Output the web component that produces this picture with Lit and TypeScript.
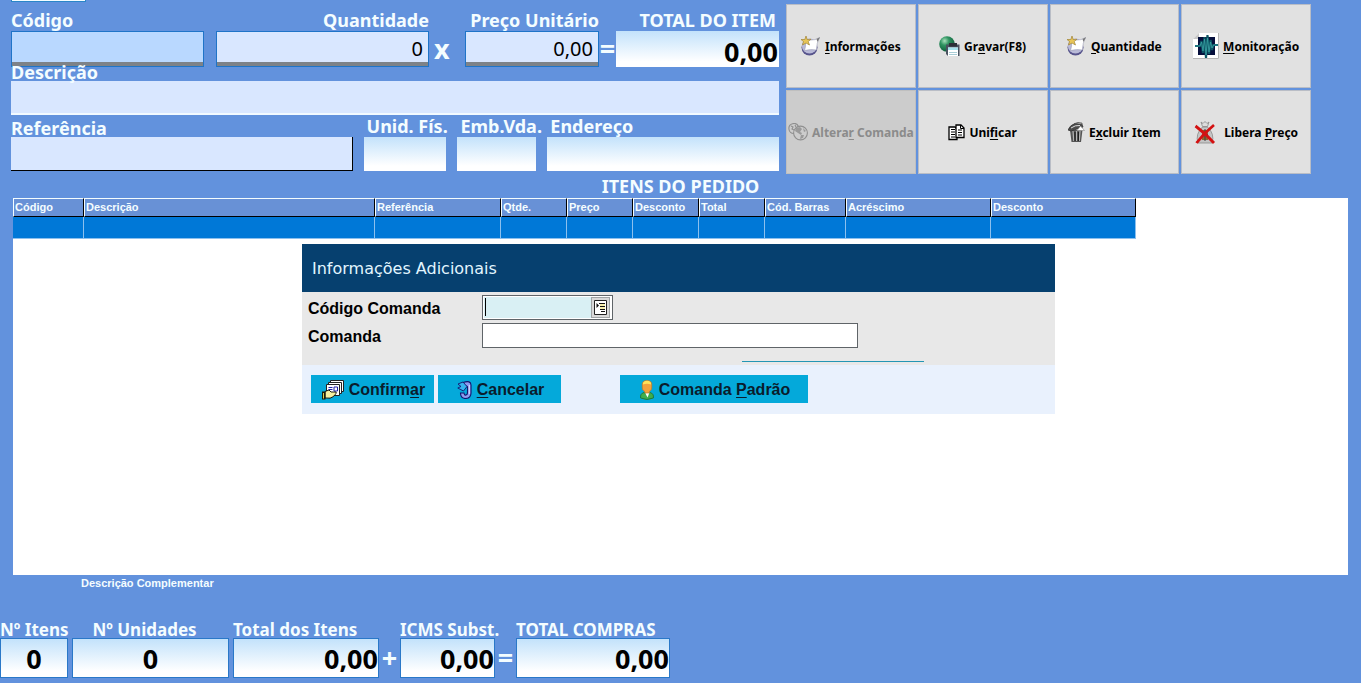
import { LitElement, html, css, svg } from "lit";
import { customElement } from "lit/decorators.js";

const scroll = svg`
  <circle cx="8.500" cy="11.500" r="8" fill="#57548c"/>
  <circle cx="8.500" cy="10" r="7.600" fill="#b9bad8"/>
  <path d="M4 4.500 L9 4 Q14 4.500 18.500 1.500 Q15.500 7 15.500 14 Q10 13 3.500 14.500 Q5.500 9 4 4.500Z" fill="#fff" stroke="#9a9cb4" stroke-width=".6"/>
  <path d="M15.500 3 L19 1.200 L16.500 6Z" fill="#777"/>
  <path d="M5 0 L6.200 3.500 L10 3.200 L7.200 5.500 L8.500 9 L5 7 L1.500 9 L2.500 5.500 L0 3.500 L3.800 3.500Z" fill="#e8c558" stroke="#a08538" stroke-width=".7"/>`;

const globeDisk = svg`
  <defs><radialGradient id="g" cx=".35" cy=".3" r=".7"><stop offset="0" stop-color="#a8e0bc"/><stop offset=".4" stop-color="#2f9461"/><stop offset="1" stop-color="#0f5d3b"/></radialGradient></defs>
  <circle cx="8" cy="8" r="7.800" fill="url(#g)"/>
  <path d="M7 8.500h13.500v11.500H9L7 18Z" fill="#4a5260"/>
  <path d="M10 7h8v3.500h-8z" fill="#2c3038"/>
  <path d="M9 11.500h10v8.500H9z" fill="#fff"/>
  <path d="M9 11.500h10v2.500H9z" fill="#a6e4ee"/>
  <path d="M10 16.500h8M10 18.500h8" stroke="#a9cdd6"/>`;

const monitor = svg`
  <path d="M6 0H26V26H0V6Z" fill="#fff"/><path d="M0 6L6 0V6Z" fill="#c8c8c8"/>
  <path d="M25.500 0V25.500H0" fill="none" stroke="#b4b4b4"/>
  <path d="M5 4H22V22H5Z" fill="#060f3c"/>
  <path d="M2 13H7L8.500 8L10 20L11.500 4L13 25L14.500 2L16 21L17.500 7L19 17L20.500 12H25" fill="none" stroke="#0c5564" stroke-width="2.200"/>
  <path d="M2 13H7L8.500 9L10 18L11.500 6L13 22L14.500 5L16 19L17.500 9L19 15L20.500 12H25" fill="none" stroke="#3aa3a4" stroke-width=".8"/>`;

const worlds = svg`
  <g fill="none" stroke="#8f8f8f" stroke-width="1.100">
  <path d="M6 10.500A5 5 0 1 1 10.500 3.500"/><circle cx="12.500" cy="10" r="6.900"/>
  <path d="M3 3l2 1-1 2 2 1M7 2l1 2"/></g>
  <path d="M8 5L12 4L14 6L12 9L14 10L13 12L10 10L7 8ZM15 5L18 8L16 9ZM13 12L16 12L15 15L12 16Z" fill="#9a9a9a"/>`;

const pages = svg`
  <g fill="#fff" stroke="#000" stroke-width="1.300">
  <path d="M1 3H7L9 5V15.500H1Z"/><path d="M8 1H13L16 4V13.500H8Z"/></g>
  <path d="M12.500 1V4.500H16M3 5.500H7M3 8H7M3 10.500H7M3 13H7M10 6H14M10 8.500H14M10 11H14" stroke="#000" fill="none"/>`;

const trash = svg`
  <path d="M2 8H14.500L13 20H3.500Z" fill="#555"/>
  <path d="M5 9L5.800 19M8.500 9V19M12 9L11.300 19" stroke="#b5b5b5" stroke-width="1.200"/>
  <path d="M7 10V19M10.300 10V19" stroke="#111"/>
  <path d="M0 8Q2 3 7 1.500L14 2.500L15 5L3 9Z" fill="#4b4b4b" stroke="#333" stroke-width=".8"/>
  <path d="M3 6Q7 3 12 3.500" stroke="#ddd" fill="none"/>
  <path d="M9 8.500L12.500 4L16.500 8.500Z" fill="#fff" stroke="#888" stroke-width=".6"/>
  <path d="M6 1.800L10 .6L14 1.200V3" fill="none" stroke="#555"/>`;

const bagX = svg`
  <path d="M7 1L9 2.500L11 .5L13 2.500L15 1L13.500 5.500H8.500Z" fill="#ddd" stroke="#888" stroke-width=".8"/>
  <path d="M8.500 6H13.500Q21 13 18 22H4Q1 13 8.500 6Z" fill="#c4c4c4" stroke="#8a8a8a" stroke-width=".8"/>
  <path d="M8 9h6v10h-6z" fill="#8c6a32"/><path d="M11 8v12M8 13.500h6" stroke="#3c3c3c"/>
  <path d="M1.500 5Q11 12 20 22M20 4Q10 12 2.500 22" stroke="#d31111" stroke-width="2.800" fill="none"/>`;

const handCards = svg`
  <g fill="#fff" stroke="#222"><path d="M8.500 .5H21.500V11.500H8.500Z"/><path d="M6.500 2.500H19.500V13.500H6.500Z"/><path d="M4.500 4.500H17.500V15.500H4.500Z"/></g>
  <path d="M6.500 7.500H10.500M6.500 9.500H10.500" stroke="#2222a8"/><path d="M12 7H15.500V11H12Z" fill="#fff" stroke="#2222a8"/>
  <path d="M3 11.500L7 10L9 12H14Q15 13.500 13 14.500L11.500 16.500Q9 19 3 18Z" fill="#f7f0a0" stroke="#000" stroke-width=".9"/>
  <path d="M0 11.500H3.500V19.500H0Z" fill="#1c1c08"/><path d="M1.500 13V18.500" stroke="#d8d050"/>`;

const undo = svg`
  <path d="M6 1.500Q14-1 14 4V12Q14 17.500 8 17.500Q3.500 17 3.500 12H7Q7.500 14.500 9 14Q10.500 14 10.500 11V6Q10 4.500 8 5.500Z" fill="#8f9df0" stroke="#14146e" stroke-width="1.100"/>
  <path d="M1 3L6 1L10 5.500L6.500 10L.8 7L4 5.500Z" fill="#35b4ee" stroke="#14146e" stroke-width=".9"/>
  <path d="M12.300 4V13" stroke="#dde2ff"/>`;

const person = svg`
  <path d="M.6 18Q0 13.500 4 12.500L7 14L10 12.500Q14 13.500 13.400 18Q7 21 .6 18Z" fill="#3fae4e" stroke="#1c6e2c" stroke-width=".8"/>
  <path d="M5 12.500L7.500 17.500L9.500 12.500Z" fill="#fff"/>
  <path d="M2.200 5Q2 .5 7 .5Q12 .5 11.800 5Q12.500 10 9.500 11.500L9 13H5L4.500 11.500Q1.500 10 2.200 5Z" fill="#f2a23c" stroke="#b87a26" stroke-width=".7"/>
  <path d="M2.800 4.500Q3 .8 7 .8Q11 .8 11.200 4.500Q7 3 2.800 4.500Z" fill="#ffe35a"/>`;

const list = svg`
  <path d="M.5 .5H12.500V14.500H.5Z" fill="#fff" stroke="#222"/>
  <path d="M5 3.500H11M6 6.500H11M6 9.500H11M7 11.500H11" stroke="#111"/>
  <path d="M6 5H11M6 8H11" stroke="#f0e060"/>
  <path d="M2.500 3V8L5 5.500Z" fill="#111"/>`;

const icon = (w: number, h: number, art: unknown) =>
  html`<svg width=${w} height=${h} viewBox="0 0 ${w} ${h}" aria-hidden="true">${art}</svg>`;

const columns: [string, string][] = [
  ["Código", "w71"], ["Descrição", "w291"], ["Referência", "w126"], ["Qtde.", "w66"], ["Preço", "w66"],
  ["Desconto", "w66"], ["Total", "w66"], ["Cód. Barras", "w81"], ["Acréscimo", "w145"], ["Desconto", "w145"],
];

@customElement("app-root")
export class AppRoot extends LitElement {
  static styles = css`
    :host {
      display: flex;
      flex-direction: column;
      min-height: 100vh;
      box-sizing: border-box;
      background: #6292dd;
      color: #f4fdff;
      font-family: "Noto Sans", "Open Sans", sans-serif;
    }
    * { box-sizing: border-box; }
    svg { display: block; flex: none; }
    input, button { font: inherit; border-radius: 0; margin: 0; }
    input { display: block; width: 100%; min-width: 0; border: 0; padding: 0; color: #000; outline: 0; }
    button { border: 0; padding: 0; color: #000; cursor: pointer; }

    .top { display: flex; gap: 7px; padding: 0 50px 0 11px; }
    .fields { flex: 768 1 0; min-width: 0; font-size: 18px; font-weight: 700; }
    .stub { height: 2px; width: 75px; background: #f4fdff; border: 1px solid #2a86c8; border-top: 0; }
    label { display: block; white-space: nowrap; line-height: 22px; }
    label.tight { line-height: 11px; padding-bottom: 3px; }
    .right { text-align: right; }
    .caps { padding-right: 3px; }
    .row1 { display: grid; grid-template-columns: 193fr 12px 213fr 36px 134fr 17px 163fr; margin-top: 7px; align-items: end; }
    .row3 { display: grid; grid-template-columns: minmax(0, 342fr) minmax(0, 83fr) minmax(0, 79fr) minmax(0, 232fr); column-gap: 11px; align-items: end; }
    .row3 label { padding-left: 3px; }
    .row3 label.tight { padding-left: 0; }
    .op { line-height: 36px; text-align: center; font-size: 27px; }
    .times { text-align: left; padding-left: 5px; }
    .edit { height: 36px; background: #d9e7ff; border: 1px solid #1f74c8; box-shadow: inset 0 -4px #7d8288; padding: 0 5px 2px; text-align: right; font-weight: 400; font-size: 20px; }
    .active { background: #b9d8ff; text-align: left; }
    .wide { height: 34px; background: #d9e7ff; border-bottom: 2px solid #f2faff; padding: 0 5px; }
    .ref { border-bottom: 1px solid #000; border-right: 1px solid #000; }
    .shade { height: 34px; background: linear-gradient(#c3e2fb, #fff 85%); padding: 0 4px; }
    .sum { height: 36px; padding: 4px 1px 0 0; text-align: right; font-weight: 700; font-size: 27px; }

    .tools { flex: 525 1 0; min-width: 0; display: grid; grid-template-columns: repeat(4, minmax(0, 1fr)); grid-auto-rows: 84px; gap: 2px; padding-top: 4px; }
    .tool { display: flex; align-items: center; justify-content: center; gap: 4px; background: #e1e1e1; border: 1px solid #b9bdc6; font-size: 12px; font-weight: 700; white-space: nowrap; }
    .tool:disabled { background: #ccc; color: #8b8b8b; border-color: #bfbfbf; }
    u { text-underline-offset: 2px; text-decoration-thickness: 1px; }

    h1 { margin: 0; font-size: 18px; font-weight: 700; line-height: 24px; text-align: center; }
    .items { flex: 1; margin: 0 13px; padding-right: 4px; background: #fff; min-height: 300px; }
    table { table-layout: fixed; border-collapse: separate; border-spacing: 0; width: 1123px; font-family: "Liberation Sans", Arial, sans-serif; }
    th { height: 19px; padding: 0 1px; font-size: 11px; line-height: 17px; font-weight: 700; text-align: left; background: #6891d6; border: 1px solid; border-color: #f4fdff #000 #000 #f4fdff; white-space: nowrap; }
    td { height: 22px; padding: 0; background: #0078d7; border-right: 1px solid #8cc0ee; border-bottom: 1px solid #8cc0ee; }
    .w71 { width: 71px; } .w291 { width: 291px; } .w126 { width: 126px; } .w66 { width: 66px; } .w81 { width: 81px; } .w145 { width: 145px; }

    .dialog { max-width: 753px; margin: 5px auto 0; color: #000; font-family: "Liberation Sans", Arial, sans-serif; font-size: 16px; font-weight: 700; }
    h2 { margin: 0; padding: 2px 10px 0; background: #06406f; color: #e2f6ff; font: 400 16px/46px "DejaVu Sans", Verdana, sans-serif; }
    .body { display: grid; grid-template-columns: 174px 1fr; row-gap: 3px; padding: 3px 6px; background: #e8e8e8; }
    .body label { line-height: 23px; padding-top: 2px; }
    .lookup { display: flex; width: 131px; height: 25px; border: 1px solid #5f6468; padding: 1px; background: #fff; }
    .lookup input { flex: 1; background: linear-gradient(#000, #000) 1px 1px / 1px 18px no-repeat #d9f0f4; }
    .lookup button { width: 19px; margin-right: 1px; display: grid; place-items: center; background: #d8d8d8; border: 1px solid #a0a4a6; }
    .comanda { width: 376px; height: 25px; border: 1px solid #5f6468; background: #fff; padding: 0 4px; }
    .rule { grid-column: 2; width: 182px; height: 11px; margin-left: 260px; border-bottom: 1px solid #2396b4; }
    .actions { display: flex; gap: 4px; padding: 10px 9px 11px; background: #e9f1fd; }
    .action { display: flex; align-items: center; justify-content: center; gap: 5px; width: 123px; height: 28px; padding: 2px 0 0 2px; background: #04a9da; color: #0a1c2c; }
    .default { width: 188px; margin-left: 55px; }

    .extra { font: 700 11px/16px "Liberation Sans", Arial, sans-serif; margin: 0 0 0 81px; }
    .totals { display: flex; gap: 4px; align-items: flex-end; padding: 30px 0 5px; font-size: 17px; font-weight: 700; }
    .totals label { line-height: 17px; }
    .totals .sum { height: 40px; padding: 0; border: 1px solid #2a78c8; }
    .totals .mid { text-align: center; }
    .totals label.mid { padding-right: 12px; }
    .totals .op { width: 13px; line-height: 40px; display: flex; justify-content: center; }
    .t68 { width: 68px; } .t157 { width: 157px; } .t146 { width: 146px; } .t95 { width: 95px; } .t154 { width: 154px; }
  `;

  render() {
    return html`
      <header class="top">
        <div class="fields">
          <div class="stub"></div>
          <div class="row1">
            <div><label for="codigo">Código</label><input id="codigo" class="edit active" /></div>
            <span></span>
            <div><label class="right" for="qtd">Quantidade</label><input id="qtd" class="edit" value="0" /></div>
            <span class="op times">x</span>
            <div><label class="right" for="preco">Preço Unitário</label><input id="preco" class="edit" value="0,00" /></div>
            <span class="op">=</span>
            <div><label class="right caps" for="total">TOTAL DO ITEM</label><input id="total" class="shade sum" value="0,00" readonly /></div>
          </div>
          <label class="tight" for="desc">Descrição</label>
          <input id="desc" class="wide" />
          <div class="row3">
            <div><label class="tight" for="ref">Referência</label><input id="ref" class="wide ref" /></div>
            <div><label for="unid">Unid. Fís.</label><input id="unid" class="shade" readonly /></div>
            <div><label for="emb">Emb.Vda.</label><input id="emb" class="shade" readonly /></div>
            <div><label for="end">Endereço</label><input id="end" class="shade" readonly /></div>
          </div>
        </div>
        <nav class="tools">
          <button class="tool">${icon(20, 20, scroll)}<span><u>I</u>nformações</span></button>
          <button class="tool">${icon(21, 20, globeDisk)}<span>Gr<u>a</u>var(F8)</span></button>
          <button class="tool">${icon(20, 20, scroll)}<span><u>Q</u>uantidade</span></button>
          <button class="tool">${icon(26, 26, monitor)}<span><u>M</u>onitoração</span></button>
          <button class="tool" disabled>${icon(20, 18, worlds)}<span>Altera<u>r</u> Comanda</span></button>
          <button class="tool">${icon(17, 17, pages)}<span>Uni<u>f</u>icar</span></button>
          <button class="tool">${icon(17, 21, trash)}<span>E<u>x</u>cluir Item</span></button>
          <button class="tool">${icon(26, 23, bagX)}<span>Libera <u>P</u>reço</span></button>
        </nav>
      </header>
      <h1>ITENS DO PEDIDO</h1>
      <main class="items">
        <table>
          <thead><tr>${columns.map(([name, width]) => html`<th class=${width}>${name}</th>`)}</tr></thead>
          <tbody><tr>${columns.map(() => html`<td></td>`)}</tr></tbody>
        </table>
        <section class="dialog" role="dialog" aria-labelledby="dlg">
          <h2 id="dlg">Informações Adicionais</h2>
          <div class="body">
            <label for="cod">Código Comanda</label>
            <div class="lookup"><input id="cod" /><button aria-label="Pesquisar">${icon(13, 15, list)}</button></div>
            <label for="com">Comanda</label>
            <input id="com" class="comanda" />
            <div class="rule"></div>
          </div>
          <div class="actions">
            <button class="action">${icon(22, 20, handCards)}<span>Confirm<u>a</u>r</span></button>
            <button class="action">${icon(15, 18, undo)}<span><u>C</u>ancelar</span></button>
            <button class="action default">${icon(14, 20, person)}<span>Comanda <u>P</u>adrão</span></button>
          </div>
        </section>
      </main>
      <footer>
        <p class="extra">Descrição Complementar</p>
        <div class="totals">
          <div class="t68"><label for="n1">Nº Itens</label><input id="n1" class="shade sum mid" value="0" readonly /></div>
          <div class="t157"><label class="mid" for="n2">Nº Unidades</label><input id="n2" class="shade sum mid" value="0" readonly /></div>
          <div class="t146"><label for="n3">Total dos Itens</label><input id="n3" class="shade sum" value="0,00" readonly /></div>
          <span class="op">+</span>
          <div class="t95"><label for="n4">ICMS Subst.</label><input id="n4" class="shade sum" value="0,00" readonly /></div>
          <span class="op">=</span>
          <div class="t154"><label for="n5">TOTAL COMPRAS</label><input id="n5" class="shade sum" value="0,00" readonly /></div>
        </div>
      </footer>
    `;
  }
}
